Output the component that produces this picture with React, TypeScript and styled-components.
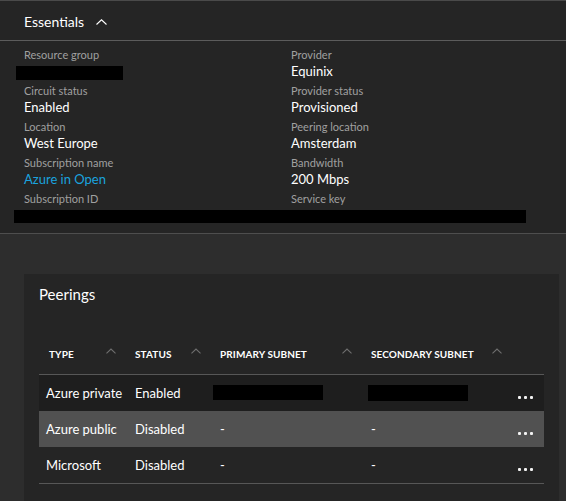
import React from "react";
import styled, { createGlobalStyle } from "styled-components";

const GlobalStyle = createGlobalStyle`
  html, body { margin: 0; padding: 0; background: #2d2d2d; }
  body { font-family: "Segoe UI", Lato, "Noto Sans", sans-serif; color: #fff; }
  * { box-sizing: border-box; }
`;

const Page = styled.div`
  width: 566px;
  min-height: 501px;
  background: #2d2d2d;
  overflow: hidden;
`;

const EssentialsPanel = styled.section`
  background: #252525;
  border-top: 1px solid #4a4a4a;
  border-bottom: 1px solid #4e4e4e;
`;

const PanelHeader = styled.div`
  height: 40px;
  display: flex;
  align-items: center;
  gap: 12px;
  padding: 2px 0 0 24px;
  border-bottom: 1px solid #5c5c5c;
  font-size: 14px;
  color: #fff;
`;

const EssentialsGrid = styled.div`
  display: grid;
  grid-template-columns: 267px 1fr;
  padding: 6px 0 6px 24px;
`;

const Field = styled.div`
  display: flex;
  flex-direction: column;
`;

const Label = styled.div`
  font-size: 11px;
  line-height: 16px;
  color: #a0a0a0;
`;

const Value = styled.div<{ $link?: boolean }>`
  font-size: 13px;
  line-height: 16px;
  height: 20px;
  color: ${(p) => (p.$link ? "#1aa3df" : "#ffffff")};
`;

const Redacted = styled.div<{ $w: number; $h: number; $shift?: number; $top?: number }>`
  background: #000;
  width: ${(p) => p.$w}px;
  height: ${(p) => p.$h}px;
  margin-left: ${(p) => p.$shift ?? 0}px;
  margin-top: ${(p) => p.$top ?? 0}px;
`;

const Lower = styled.div`
  padding: 40px 7px 0 24px;
`;

const Card = styled.section`
  background: #252525;
  padding: 10px 15px 20px 15px;
`;

const CardTitle = styled.div`
  font-size: 15px;
  line-height: 20px;
  color: #fff;
  margin-bottom: 30px;
`;

const columns = "89px 85px 151px 150px 30px";

const Table = styled.div`
  display: flex;
  flex-direction: column;
  border-bottom: 1px solid #575757;
`;

const HeaderRow = styled.div`
  display: grid;
  grid-template-columns: ${columns};
  height: 41px;
  border-bottom: 1px solid #575757;
`;

const HeaderCell = styled.div<{ $first?: boolean }>`
  display: flex;
  align-items: center;
  justify-content: space-between;
  padding: 0 12px 0 ${(p) => (p.$first ? 10 : 7)}px;
  font-size: 10px;
  font-weight: 700;
  letter-spacing: 0.1px;
  text-transform: uppercase;
  color: #fff;
`;

const SortIcon = styled.svg`
  width: 10px;
  height: 6px;
  transform: translateY(-3px);
  flex-shrink: 0;
`;

const Row = styled.div<{ $tone?: "dark" | "selected" | "plain" }>`
  display: grid;
  grid-template-columns: ${columns};
  height: 36px;
  background: ${(p) =>
    p.$tone === "dark" ? "#1e1e1e" : p.$tone === "selected" ? "#515151" : "transparent"};
`;

const Cell = styled.div`
  display: flex;
  align-items: center;
  padding: 0 0 1px 7px;
  font-size: 13px;
  color: #fff;
  white-space: nowrap;
`;

const MoreCell = styled.div`
  display: flex;
  align-items: center;
  gap: 3px;
  padding: 8px 0 0 4px;
`;

const Dot = styled.span`
  width: 3px;
  height: 3px;
  border-radius: 1px;
  background: #f2f2f2;
`;

const Chevron = ({ color }: { color: string }) => (
  <svg width="11" height="6" viewBox="0 0 11 6" fill="none">
    <path d="M0.5 5.5 L5.5 0.8 L10.5 5.5" stroke={color} strokeWidth="1.1" />
  </svg>
);

const Sort = () => (
  <SortIcon viewBox="0 0 10 6" fill="none">
    <path d="M0.5 5.3 L5 1 L9.5 5.3" stroke="#6f6f6f" strokeWidth="1.1" />
  </SortIcon>
);

const More = () => (
  <MoreCell>
    <Dot />
    <Dot />
    <Dot />
  </MoreCell>
);

type Peering = {
  type: string;
  status: string;
  primary: React.ReactNode;
  secondary: React.ReactNode;
  tone: "dark" | "selected" | "plain";
};

const peerings: Peering[] = [
  {
    type: "Azure private",
    status: "Enabled",
    primary: <Redacted $w={110} $h={15} $shift={-7} />,
    secondary: <Redacted $w={100} $h={16} $shift={-3} $top={1} />,
    tone: "dark",
  },
  { type: "Azure public", status: "Disabled", primary: "-", secondary: "-", tone: "selected" },
  { type: "Microsoft", status: "Disabled", primary: "-", secondary: "-", tone: "plain" },
];

export default function App() {
  return (
    <Page>
      <GlobalStyle />
      <EssentialsPanel>
        <PanelHeader>
          <span>Essentials</span>
          <Chevron color="#ffffff" />
        </PanelHeader>
        <EssentialsGrid>
          <Field>
            <Label>Resource group</Label>
            <Value>
              <Redacted $w={107} $h={14} $shift={-8} $top={3} />
            </Value>
          </Field>
          <Field>
            <Label>Provider</Label>
            <Value>Equinix</Value>
          </Field>
          <Field>
            <Label>Circuit status</Label>
            <Value>Enabled</Value>
          </Field>
          <Field>
            <Label>Provider status</Label>
            <Value>Provisioned</Value>
          </Field>
          <Field>
            <Label>Location</Label>
            <Value>West Europe</Value>
          </Field>
          <Field>
            <Label>Peering location</Label>
            <Value>Amsterdam</Value>
          </Field>
          <Field>
            <Label>Subscription name</Label>
            <Value $link>Azure in Open</Value>
          </Field>
          <Field>
            <Label>Bandwidth</Label>
            <Value>200 Mbps</Value>
          </Field>
          <Field>
            <Label>Subscription ID</Label>
            <Value>
              <Redacted $w={277} $h={13} $shift={-10} $top={3} />
            </Value>
          </Field>
          <Field>
            <Label>Service key</Label>
            <Value>
              <Redacted $w={235} $h={13} $top={3} />
            </Value>
          </Field>
        </EssentialsGrid>
      </EssentialsPanel>
      <Lower>
        <Card>
          <CardTitle>Peerings</CardTitle>
          <Table>
            <HeaderRow>
              <HeaderCell $first>
                Type
                <Sort />
              </HeaderCell>
              <HeaderCell>
                Status
                <Sort />
              </HeaderCell>
              <HeaderCell>
                Primary subnet
                <Sort />
              </HeaderCell>
              <HeaderCell>
                Secondary subnet
                <Sort />
              </HeaderCell>
              <HeaderCell />
            </HeaderRow>
            {peerings.map((p) => (
              <Row key={p.type} $tone={p.tone}>
                <Cell>{p.type}</Cell>
                <Cell>{p.status}</Cell>
                <Cell>{p.primary}</Cell>
                <Cell>{p.secondary}</Cell>
                <More />
              </Row>
            ))}
          </Table>
        </Card>
      </Lower>
    </Page>
  );
}
